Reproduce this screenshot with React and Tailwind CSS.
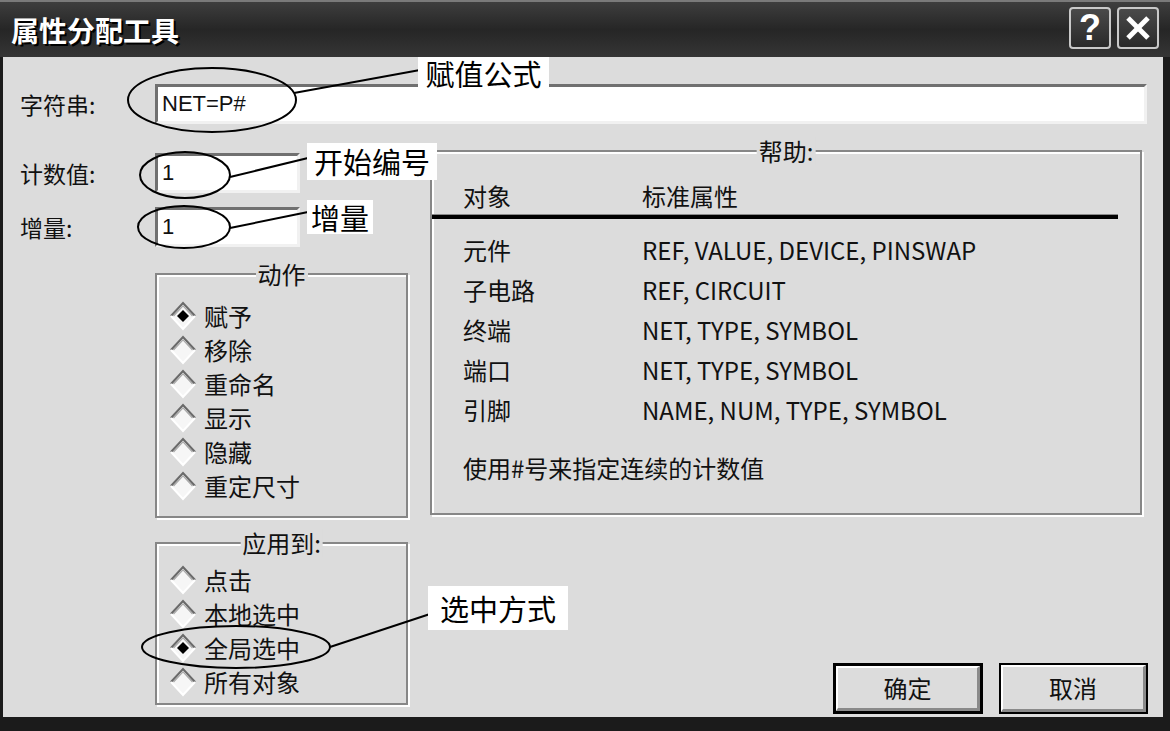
import React from "react";

function Diamond({ checked }) {
  return (
    <svg width="28" height="30" viewBox="0 0 28 30" className="shrink-0">
      <polygon points="14,2 26,15 14,28 2,15" fill="#f6f6f6" />
      <polyline points="2,15 14,2 26,15" fill="none" stroke="#6a6a6a" strokeWidth="2.2" />
      <polyline points="4.5,15 14,4.8 23.5,15" fill="none" stroke="#a8a8a8" strokeWidth="1.2" />
      <polyline points="2,15 14,28 26,15" fill="none" stroke="#ffffff" strokeWidth="2" />
      {checked && <polygon points="14,9 20,15 14,21 8,15" fill="#000" />}
    </svg>
  );
}

function Radio({ label, checked }) {
  return (
    <div className="flex items-center h-[34px] gap-[7px]">
      <Diamond checked={checked} />
      <span className="text-[24px] leading-[34px] text-[#111]">{label}</span>
    </div>
  );
}

function Group({ title, className, children }) {
  return (
    <div
      className={`relative border-2 border-[#878787] shadow-[inset_2px_2px_0_#ffffff,2px_2px_0_#ffffff] ${className}`}
    >
      <span className="absolute left-1/2 -translate-x-1/2 -top-[15px] bg-[#dcdcdc] px-[2px] text-[24px] leading-[28px] text-[#111] whitespace-nowrap">
        {title}
      </span>
      {children}
    </div>
  );
}

function SunkenInput({ value, className }) {
  return (
    <div
      className={`bg-white border-t-[3px] border-l-[3px] border-r-[3px] border-b-[3px] border-t-[#707070] border-l-[#707070] border-r-[#f1f1f1] border-b-[#f1f1f1] flex items-center pl-[4px] ${className}`}
    >
      <span className="font-['Liberation_Sans',sans-serif] text-[22px] leading-none text-[#111]">{value}</span>
    </div>
  );
}

function Btn({ label, isDefault }) {
  return (
    <div
      className={`bg-black ${isDefault ? "p-[3px]" : "p-[2px]"} ${isDefault ? "w-[150px]" : "w-[149px]"} h-[51px]`}
    >
      <div className="w-full h-full bg-[#dcdcdc] border-t-2 border-l-2 border-t-white border-l-white border-b-[3px] border-r-[3px] border-b-[#8a8a8a] border-r-[#8a8a8a] flex items-center justify-center">
        <span className="text-[24px] leading-none text-[#111]">{label}</span>
      </div>
    </div>
  );
}

const rows = [
  ["元件", "REF, VALUE, DEVICE, PINSWAP"],
  ["子电路", "REF, CIRCUIT"],
  ["终端", "NET, TYPE, SYMBOL"],
  ["端口", "NET, TYPE, SYMBOL"],
  ["引脚", "NAME, NUM, TYPE, SYMBOL"],
];

export default function App() {
  return (
    <div className="relative w-[1170px] h-[731px] overflow-hidden bg-[#1b1b1b] flex flex-col font-['Noto_Sans_CJK_SC',sans-serif]">
      {/* Title bar */}
      <div className="h-[57px] shrink-0 flex items-center justify-between border-t-2 border-[#7a7a7a] bg-gradient-to-b from-[#3e3e3e] via-[#262626] to-[#353535] pl-[11px] pr-[11px]">
        <span className="text-white text-[28px] font-bold leading-none tracking-[0px] [text-shadow:2px_2px_0_#000]">
          属性分配工具
        </span>
        <div className="flex gap-[6px] -mt-[4px]">
          <div className="w-[42px] h-[42px] rounded-[4px] border-2 border-[#c9c9c9] bg-gradient-to-b from-[#4a4a4a] to-[#2a2a2a] flex items-center justify-center">
            <span className="font-['Liberation_Sans',sans-serif] text-white text-[36px] font-bold leading-none">?</span>
          </div>
          <div className="w-[42px] h-[42px] rounded-[4px] border-2 border-[#c9c9c9] bg-gradient-to-b from-[#4a4a4a] to-[#2a2a2a] flex items-center justify-center">
            <svg width="26" height="26" viewBox="0 0 26 26">
              <line x1="3" y1="3" x2="23" y2="23" stroke="#fff" strokeWidth="5" />
              <line x1="23" y1="3" x2="3" y2="23" stroke="#fff" strokeWidth="5" />
            </svg>
          </div>
        </div>
      </div>

      {/* Body */}
      <div className="flex-1 ml-[3px] mr-[7px] mb-[14px] bg-[#dcdcdc] pt-[27px] pl-[17px] pr-[16px] flex flex-col text-[#111]">
        {/* Row 1 */}
        <div className="flex items-center h-[40px]">
          <span className="w-[135px] shrink-0 text-[23px] leading-none">字符串:</span>
          <SunkenInput value="NET=P#" className="flex-1 h-[40px]" />
        </div>

        <div className="flex mt-[26px] gap-[22px]">
          {/* Left column */}
          <div className="w-[388px] shrink-0 flex flex-col pt-[3px]">
            <div className="flex items-center h-[40px]">
              <span className="w-[135px] shrink-0 text-[23px] leading-none">计数值:</span>
              <SunkenInput value="1" className="w-[145px] h-[40px]" />
            </div>
            <div className="flex items-center h-[40px] mt-[14px]">
              <span className="w-[135px] shrink-0 text-[23px] leading-none">增量:</span>
              <SunkenInput value="1" className="w-[145px] h-[40px]" />
            </div>
            <Group title="动作" className="ml-[135px] mt-[26px] w-[253px] h-[245px] pt-[24px] pl-[12px]">
              <Radio label="赋予" checked />
              <Radio label="移除" />
              <Radio label="重命名" />
              <Radio label="显示" />
              <Radio label="隐藏" />
              <Radio label="重定尺寸" />
            </Group>
            <Group title="应用到:" className="ml-[135px] mt-[24px] w-[253px] h-[163px] pt-[19px] pl-[12px]">
              <Radio label="点击" />
              <Radio label="本地选中" />
              <Radio label="全局选中" checked />
              <Radio label="所有对象" />
            </Group>
          </div>

          {/* Right column */}
          <div className="w-[718px] flex flex-col">
            <Group title="帮助:" className="w-[712px] h-[365px] pt-[25px]">
              <div className="flex h-[37px] items-center pl-[31px] text-[24px] leading-none">
                <span className="w-[179px]">对象</span>
                <span>标准属性</span>
              </div>
              <div className="h-[5px] mr-[22px] bg-black border-t border-[#8a8a8a]" />
              <div className="mt-[11px]">
                {rows.map(([a, b]) => (
                  <div key={a} className="flex h-[40px] items-center pl-[31px] text-[24px] leading-none">
                    <span className="w-[179px]">{a}</span>
                    <span>{b}</span>
                  </div>
                ))}
              </div>
              <div className="mt-[18px] h-[40px] flex items-center pl-[31px] text-[24px] leading-none">
                使用#号来指定连续的计数值
              </div>
            </Group>
            <div className="mt-[148px] flex gap-[16px] pl-[403px]">
              <Btn label="确定" isDefault />
              <Btn label="取消" />
            </div>
          </div>
        </div>
      </div>

      {/* Annotations overlay */}
      <svg className="absolute inset-0 pointer-events-none" width="1170" height="731" viewBox="0 0 1170 731">
        <g fill="none" stroke="#000" strokeWidth="2">
          <ellipse cx="212" cy="100" rx="84" ry="32" />
          <line x1="294" y1="93" x2="420" y2="70" />
          <ellipse cx="185" cy="175" rx="45" ry="23" />
          <line x1="230" y1="177" x2="308" y2="158" />
          <ellipse cx="184" cy="227" rx="46" ry="21" />
          <line x1="230" y1="228" x2="308" y2="212" />
          <ellipse cx="236" cy="647" rx="94" ry="21" />
          <line x1="330" y1="647" x2="430" y2="614" />
        </g>
      </svg>
      <div className="absolute left-[418px] top-[57px] w-[131px] h-[33px] bg-white flex items-center justify-center text-[29px] leading-none text-black">
        赋值公式
      </div>
      <div className="absolute left-[307px] top-[143px] w-[130px] h-[37px] bg-white flex items-center justify-center text-[29px] leading-none text-black">
        开始编号
      </div>
      <div className="absolute left-[307px] top-[200px] w-[66px] h-[34px] bg-white flex items-center justify-center text-[29px] leading-none text-black">
        增量
      </div>
      <div className="absolute left-[428px] top-[586px] w-[140px] h-[44px] bg-white flex items-center justify-center text-[29px] leading-none text-black">
        选中方式
      </div>
    </div>
  );
}
